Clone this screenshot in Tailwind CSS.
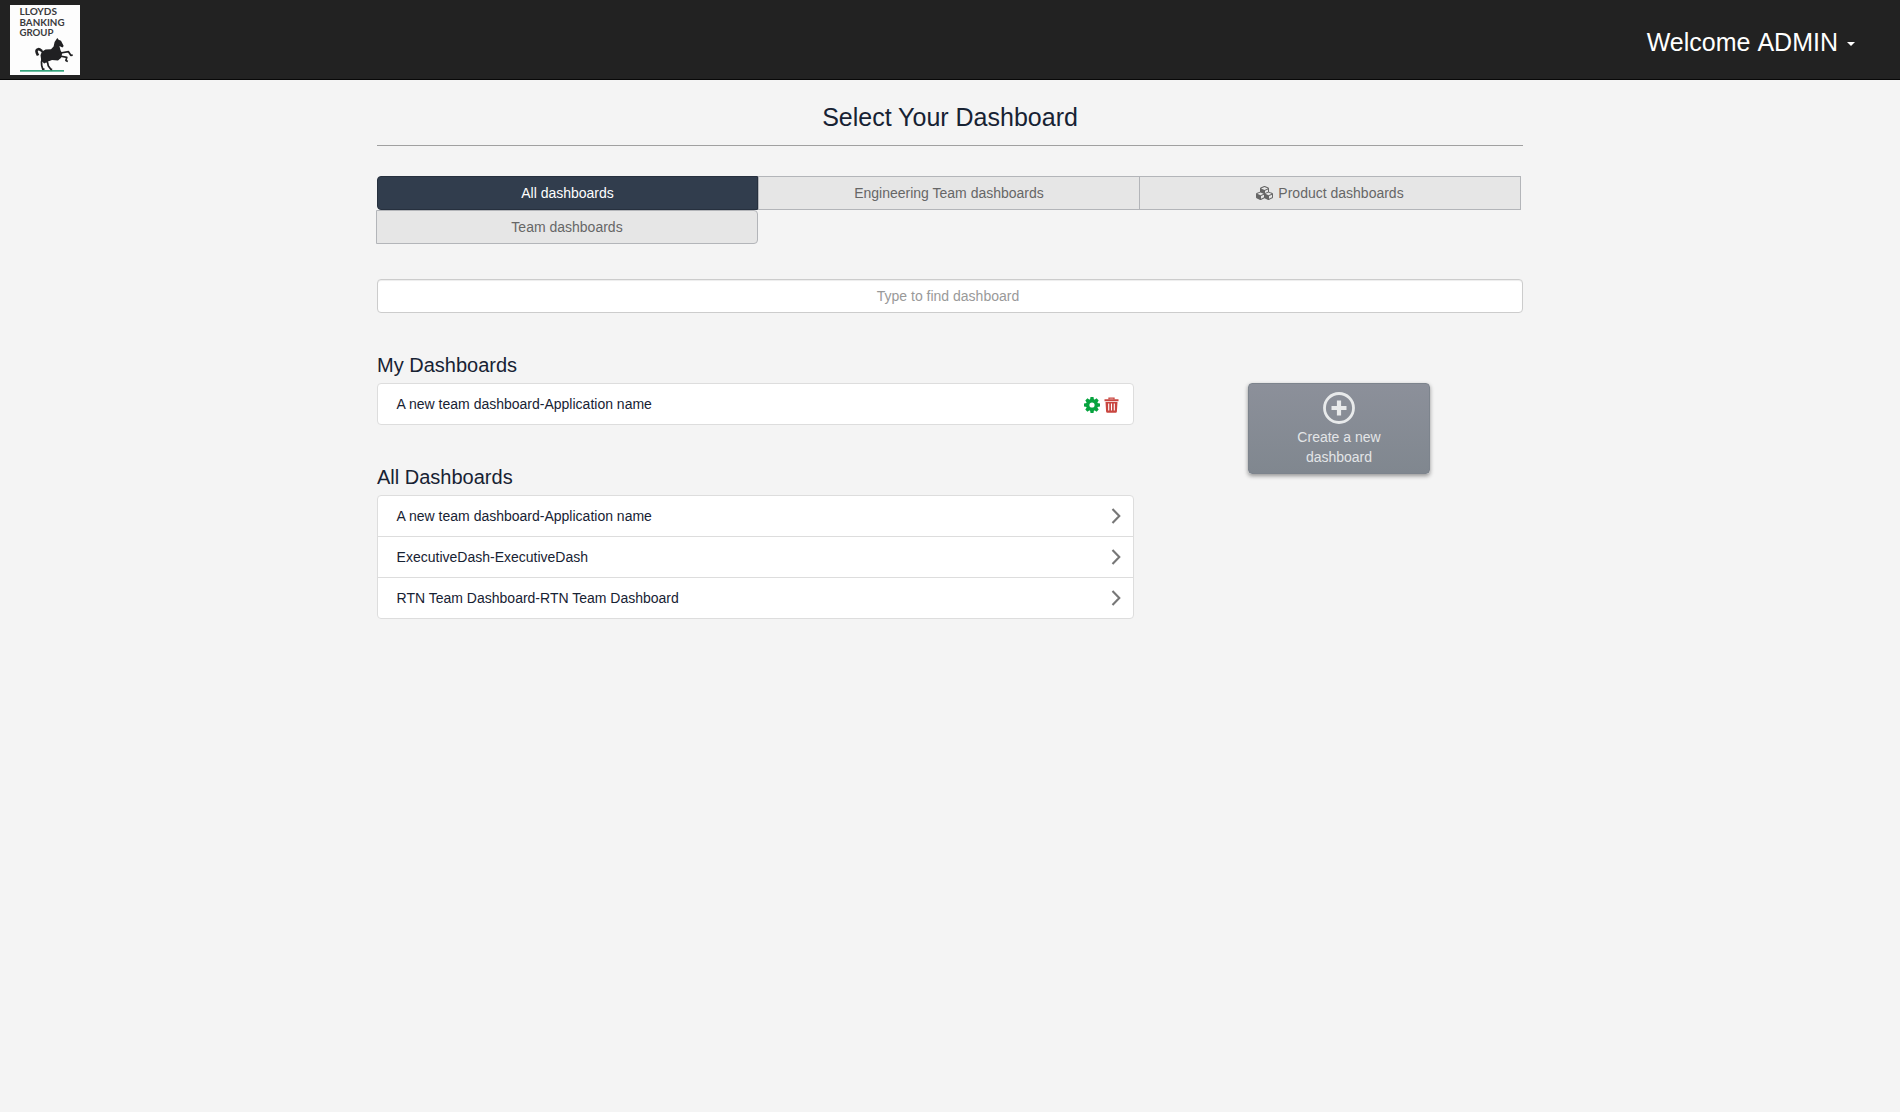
<!DOCTYPE html>
<html lang="en">
<head>
<meta charset="utf-8">
<title>Select Your Dashboard</title>
<script src="https://cdn.jsdelivr.net/npm/@tailwindcss/browser@4"></script>
</head>
<body class="min-h-screen bg-[#f4f4f4] font-['Liberation_Sans',Arial,sans-serif] text-sm leading-5 text-[#172233]">
<header class="flex h-20 items-start justify-between border-b border-[#080808] bg-[#222] pt-[5px] pr-[45px] pl-2.5">
  <svg class="size-[70px]" viewBox="0 0 70 70" role="img" aria-label="Lloyds Banking Group">
    <rect width="70" height="70" fill="#fdfdfd"/>
    <g font-family="Lato, sans-serif" font-weight="700" font-size="10" fill="#3a3a3c">
      <text x="9.500" y="10.200" textLength="37.500" lengthAdjust="spacingAndGlyphs">LLOYDS</text>
      <text x="9.500" y="20.700" textLength="45" lengthAdjust="spacingAndGlyphs">BANKING</text>
      <text x="9.500" y="31.200" textLength="34" lengthAdjust="spacingAndGlyphs">GROUP</text>
    </g>
    <rect x="10" y="65" width="44" height="1.700" fill="#36a47c"/>
    <path d="M47.300 33l1.300 1.700 2.400 1.100 2.700 5.200-1.300 1.500-3-1.400 1.200 4.500 1.600 2.600-1 4.500-3.200 2.800-6-.4-4.500 1.700-3.300 1.600-2.900-2.600-.8-5.500 1.300-3.500 3.700-2.200 5.500-.4 2.600-2.800 1-4.500z" fill="#202022"/>
    <path d="M33 46c-1.500 1-2.200-2.200-4.700-1.800-3 .7-1.700 3.200-.3 6.300" fill="none" stroke="#202022" stroke-width="2.600"/>
    <g fill="none" stroke="#202022" stroke-width="1.700" stroke-linejoin="round">
      <path d="M50.500 48l8-1.300 2.300 3.600 1.900-.2"/>
      <path d="M50 51l6.800 1.300-.9 3.200 1.900 1"/>
      <path d="M32.500 53l-1 4 .2 3.500 1.100 3.700h1.700"/>
      <path d="M36 55l1.700 3 .5 2.700 2.600 3.600h1.400"/>
    </g>
  </svg>
  <button class="flex h-[75px] items-center text-[25px] text-white"><span class="leading-[75px] [word-spacing:1.5px]">Welcome ADMIN</span>
    <svg class="mt-[3px] ml-[9px] h-1 w-2" viewBox="0 0 8 4"><path d="M0 0h8L4 4z" fill="#fff"/></svg>
  </button>
</header>

<main class="mx-auto w-[1146px]">
  <h1 class="h-[66px] border-b border-[#a0a0a0] pt-[19px] text-center text-[25px] leading-[36px]">Select Your Dashboard</h1>

  <nav class="-ml-px mt-[30px] flex w-[1145px] flex-wrap text-center text-[#666]">
    <a class="ml-px h-[34px] w-[381px] rounded-l border border-[#26303e] bg-[#313d4d] pt-1.5 text-white">All dashboards</a>
    <a class="h-[34px] w-[381px] border border-r-0 border-[#b3b5b9] bg-[#e6e6e6] pt-1.5">Engineering Team dashboards</a>
    <a class="flex h-[34px] w-[382px] justify-center gap-1 border border-[#b3b5b9] bg-[#e6e6e6] pt-1.5">
      <svg class="mt-[3px] h-3.5 w-[18px]" viewBox="0 0 2304 1792" fill="currentColor"><path d="M640 1632l384-192v-314l-384 164v342zm-64-454l404-173-404-173-404 173zm1088 454l384-192v-314l-384 164v342zm-64-454l404-173-404-173-404 173zm-448-293l384-165v-266l-384 164v267zm-64-379l441-189-441-189-441 189zm1088 518v416q0 36-19 67t-52 47l-448 224q-25 14-57 14t-57-14l-448-224q-4-2-7-4-2 2-7 4l-448 224q-25 14-57 14t-57-14l-448-224q-33-16-52-47t-19-67v-416q0-38 21.500-70t56.500-48l434-186v-400q0-38 21.500-70t56.500-48l448-192q23-10 50-10t50 10l448 192q35 16 56.500 48t21.500 70v400l434 186q36 16 57 48t21 70z"/></svg>
      <span>Product dashboards</span>
    </a>
    <a class="h-[34px] w-[382px] rounded-r border border-[#b3b5b9] bg-[#e6e6e6] pt-1.5">Team dashboards</a>
  </nav>

  <input class="mt-[35px] block h-[34px] w-full rounded border border-[#ccc] bg-white pr-4 pl-3 text-center shadow-[inset_0_1px_1px_rgba(0,0,0,0.075)] placeholder:text-[#999]" placeholder="Type to find dashboard">

  <div class="mt-10 flex items-start">
    <div class="w-[757px]">
      <h2 class="h-[30px] text-xl leading-6">My Dashboards</h2>
      <ul class="rounded border border-[#ddd] bg-white">
        <li class="flex h-10 items-center justify-between pr-3.5 pl-[18.6px]">
          <span>A new team dashboard-Application name</span>
          <span class="flex gap-1">
            <svg class="mt-px size-4" viewBox="-8 -8 16 16">
              <g fill="#07a33f"><circle r="6"/>
                <path id="teeth" d="M-1.500-8h3l.5 3h-4zM-1.500 8h3l.5-3h-4zM-8-1.500v3l3 .5v-4zM8-1.500v3l-3 .5v-4z"/>
                <use href="#teeth" transform="rotate(45)"/></g>
              <circle r="2.600" fill="#fff"/>
            </svg>
            <svg class="mt-px h-4 w-[15px]" viewBox="0 0 15 16">
              <path d="M5 2.500V1.200h5v1.300" fill="none" stroke="#c9453f" stroke-width="1.300"/>
              <path d="M.5 2.300h14v1.900H.5zM1.500 5h12l-.6 9.500q-.1 1.200-1.200 1.200H3.300q-1.100 0-1.200-1.200z" fill="#c9453f"/>
              <path d="M4.700 6.500v7M7.500 6.500v7M10.300 6.500v7" stroke="#fff" stroke-width="1.100"/>
            </svg>
          </span>
        </li>
      </ul>

      <h2 class="mt-10 h-[30px] text-xl leading-6">All Dashboards</h2>
      <ul class="divide-y divide-[#ddd] rounded border border-[#ddd] bg-white">
        <li class="box-content flex h-10 items-center justify-between pr-3 pl-[18.6px]"><span>A new team dashboard-Application name</span>
          <svg class="h-4 w-2.5" viewBox="0 0 10 16"><path d="M1.500 1L8.300 8l-6.800 7" fill="none" stroke="#777" stroke-width="2.100"/></svg></li>
        <li class="box-content flex h-10 items-center justify-between pr-3 pl-[18.6px]"><span>ExecutiveDash-ExecutiveDash</span>
          <svg class="h-4 w-2.5" viewBox="0 0 10 16"><path d="M1.500 1L8.300 8l-6.800 7" fill="none" stroke="#777" stroke-width="2.100"/></svg></li>
        <li class="box-content flex h-10 items-center justify-between pr-3 pl-[18.6px]"><span>RTN Team Dashboard-RTN Team Dashboard</span>
          <svg class="h-4 w-2.5" viewBox="0 0 10 16"><path d="M1.500 1L8.300 8l-6.800 7" fill="none" stroke="#777" stroke-width="2.100"/></svg></li>
      </ul>
    </div>

    <button class="mt-[30px] ml-[114px] flex h-[91px] w-[182px] flex-col items-center rounded border border-[#7d848d] bg-linear-to-b from-[#8c909a] to-[#80878f] pt-2 text-[#e3e5e7] shadow-[0_2px_4px_rgba(0,0,0,0.4)]">
      <svg class="size-8" viewBox="0 0 32 32" fill="none" stroke="#e8eaeb"><circle cx="16" cy="16" r="14.500" stroke-width="2.800"/><path d="M16 8.500v15M8.500 16h15" stroke-width="4.200"/></svg>
      <span class="mt-[3px] w-24">Create a new dashboard</span>
    </button>
  </div>
</main>
</body>
</html>
